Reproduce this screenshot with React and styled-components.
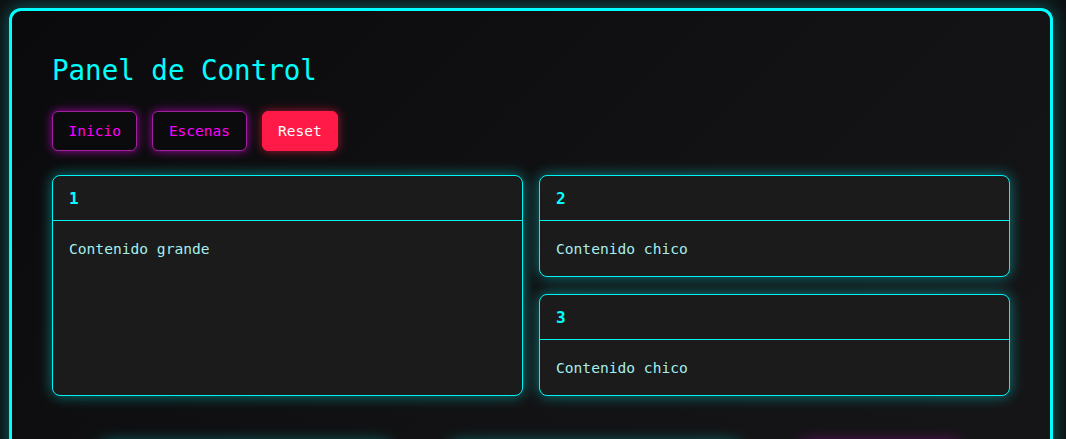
import React from 'react';
import styled, { createGlobalStyle } from 'styled-components';

const GlobalStyle = createGlobalStyle`
  html, body {
    margin: 0;
    padding: 0;
    background: #0e1012;
    overflow: hidden;
  }
  body {
    font-family: "DejaVu Sans Mono", "Liberation Mono", monospace;
  }
`;

const Page = styled.div`
  padding: 8px 13px 0 9px;
  min-height: 100vh;
  box-sizing: border-box;
`;

const Panel = styled.div`
  border: 3px solid #00ffff;
  border-radius: 12px;
  padding: 41px 40px 60px 40px;
  background: linear-gradient(135deg, #0a0a0c 0%, #121214 55%, #161618 100%);
  box-shadow: 0 0 18px rgba(0, 255, 255, 0.35);
`;

const Title = styled.h1`
  margin: 0 0 23px 0;
  font-size: 27.5px;
  line-height: 36px;
  font-weight: normal;
  color: #00ffff;
`;

const Toolbar = styled.div`
  display: flex;
  gap: 15px;
  margin-bottom: 24px;
`;

const NavButton = styled.button`
  height: 40px;
  padding: 0 15.5px;
  font-family: inherit;
  font-size: 14.5px;
  border-radius: 6px;
  cursor: pointer;
  background: ${p => (p.$danger ? '#ff1a47' : '#0b0b0d')};
  color: ${p => (p.$danger ? '#ffffff' : '#ff00ff')};
  border: 1px solid ${p => (p.$danger ? '#ff1a47' : '#a020a0')};
  box-shadow: ${p =>
    p.$danger ? '0 0 10px rgba(255, 26, 71, 0.65)' : '0 0 10px rgba(255, 0, 255, 0.6)'};
`;

const CardGrid = styled.div`
  display: grid;
  grid-template-columns: 1fr 1fr;
  grid-template-rows: 102px 102px;
  column-gap: 16px;
  row-gap: 17px;
`;

const Card = styled.div`
  grid-row: ${p => (p.$tall ? 'span 2' : 'auto')};
  display: flex;
  flex-direction: column;
  background: #1b1b1b;
  border: 1px solid #00f4f4;
  border-radius: 8px;
  box-shadow: 0 0 14px rgba(0, 255, 255, 0.45);
  overflow: hidden;
`;

const CardHeader = styled.div`
  height: 44px;
  padding: 0 16px;
  display: flex;
  align-items: center;
  border-bottom: 1px solid #00f4f4;
  color: #00ffff;
  font-weight: bold;
  font-size: 16px;
`;

const CardBody = styled.div`
  padding: 16px 16px 16px 16px;
  font-size: 14.6px;
  line-height: 23px;
  color: #a6eeee;
`;

const StatusRow = styled.div`
  display: flex;
  gap: 60px;
  margin-top: 47px;
  padding-left: 48px;
`;

const StatusItem = styled.div`
  width: ${p => p.$w}px;
  height: 40px;
  border-radius: 8px;
  background: #1b1b1b;
  box-shadow: 0 0 16px ${p => (p.$pink ? 'rgba(255, 0, 255, 0.45)' : 'rgba(0, 255, 255, 0.45)')};
`;

const cards = [
  { id: '1', text: 'Contenido grande', tall: true },
  { id: '2', text: 'Contenido chico' },
  { id: '3', text: 'Contenido chico' },
];

export default function App() {
  return (
    <Page>
      <GlobalStyle />
      <Panel>
        <Title>Panel de Control</Title>
        <Toolbar>
          <NavButton>Inicio</NavButton>
          <NavButton>Escenas</NavButton>
          <NavButton $danger>Reset</NavButton>
        </Toolbar>
        <CardGrid>
          {cards.map(c => (
            <Card key={c.id} $tall={c.tall}>
              <CardHeader>{c.id}</CardHeader>
              <CardBody>{c.text}</CardBody>
            </Card>
          ))}
        </CardGrid>
        <StatusRow>
          <StatusItem $w={290} />
          <StatusItem $w={290} />
          <StatusItem $w={160} $pink />
        </StatusRow>
      </Panel>
    </Page>
  );
}
